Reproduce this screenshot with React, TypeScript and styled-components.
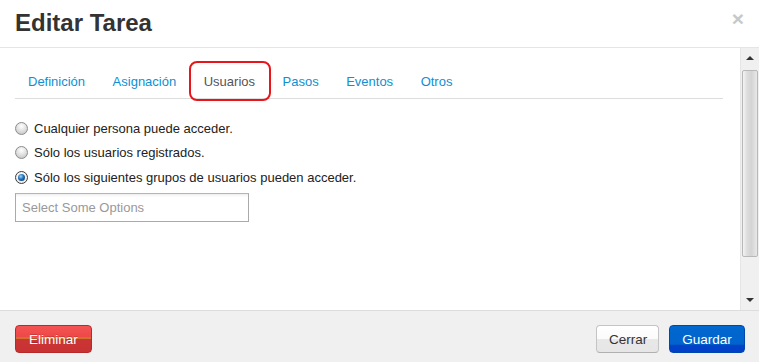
import React, {useState} from 'react';
import styled, {createGlobalStyle, css} from 'styled-components';

const GlobalStyle = createGlobalStyle`
  html, body {
    margin: 0;
    padding: 0;
    background: #fff;
  }
  body {
    font-family: "Liberation Sans", Arial, sans-serif;
    font-size: 13px;
    color: #333;
  }
`;

const Dialog = styled.div`
  width: 759px;
  height: 362px;
  display: flex;
  flex-direction: column;
  background: #fff;
  overflow: hidden;
`;

const Header = styled.div`
  height: 47px;
  border-bottom: 1px solid #e5e5e5;
  display: flex;
  align-items: center;
  justify-content: space-between;
  padding: 0 15px 0 15px;
  flex-shrink: 0;
`;

const Title = styled.h3`
  margin: 0;
  font-size: 24px;
  font-weight: bold;
  color: #333;
  line-height: 30px;
  position: relative;
  top: -1px;
`;

const Close = styled.span`
  font-size: 21px;
  font-weight: bold;
  color: #c8c8c8;
  line-height: 18px;
  cursor: pointer;
  position: relative;
  top: -5px;
  right: 0;
`;

const BodyRow = styled.div`
  flex: 1;
  display: flex;
  min-height: 0;
`;

const Body = styled.div`
  flex: 1;
  padding: 17px 17px 0 15px;
`;

const Tabs = styled.ul`
  list-style: none;
  margin: 0;
  padding: 0;
  display: flex;
  border-bottom: 1px solid #ddd;
`;

const Tab = styled.li<{active?: boolean}>`
  position: relative;
  padding: 0 14.5px 0 13px;
  line-height: 33px;
  font-size: 13px;
  color: #0e90d2;
  cursor: pointer;
  ${({active}) => active && css`
    color: #555;
  `}
`;

const Highlight = styled.span`
  position: absolute;
  left: -2px;
  right: -1px;
  top: -4px;
  bottom: -3px;
  border: 2px solid #e8161b;
  border-radius: 8px;
  pointer-events: none;
`;

const Options = styled.div`
  margin-top: 17px;
`;

const OptionRow = styled.label`
  height: 24.5px;
  display: flex;
  align-items: center;
  gap: 6px;
  font-size: 13px;
  color: #222;
  cursor: pointer;
`;

const RadioMark = styled.span<{checked?: boolean}>`
  width: 13px;
  height: 13px;
  box-sizing: border-box;
  border-radius: 50%;
  border: 1px solid #8c8c8c;
  background: radial-gradient(circle at 50% 30%, #ffffff 0%, #e6e6e6 40%, #bdbdbd 100%);
  position: relative;
  flex-shrink: 0;
  ${({checked}) => checked && css`
    border-color: #3a3a3a;
    background: radial-gradient(circle at 50% 35%, #ffffff 0%, #e4e4e4 100%);
    &::after {
      content: '';
      position: absolute;
      left: 2px;
      top: 2px;
      width: 7px;
      height: 7px;
      border-radius: 50%;
      background: radial-gradient(circle at 40% 35%, #9fd6ff 0%, #1f6fb8 45%, #0b2a52 100%);
    }
  `}
`;

const SelectBox = styled.div`
  margin-top: 3px;
  width: 234px;
  height: 29px;
  box-sizing: border-box;
  border: 1px solid #aaa;
  border-top-color: #b5b5b5;
  background: linear-gradient(#eee 0, #fff 3px, #fff 100%);
  display: flex;
  align-items: center;
  padding-left: 6px;
  font-size: 13px;
  color: #999;
`;

const ScrollBar = styled.div`
  width: 19px;
  display: flex;
  flex-direction: column;
  background: #f0f0f0;
  border-left: 1px solid #e6e6e6;
  box-sizing: border-box;
  padding: 0 1px;
`;

const ArrowButton = styled.div<{down?: boolean}>`
  height: 20px;
  display: flex;
  align-items: center;
  justify-content: center;
  &::before {
    content: '';
    width: 0;
    height: 0;
    border-left: 4px solid transparent;
    border-right: 4px solid transparent;
    ${({down}) => down
      ? css`border-top: 4px solid #333;`
      : css`border-bottom: 4px solid #333;`}
  }
`;

const Track = styled.div`
  flex: 1;
  display: flex;
  flex-direction: column;
  padding-top: 2px;
`;

const Thumb = styled.div`
  height: 187px;
  box-sizing: border-box;
  border: 1px solid #b8b8b8;
  border-radius: 2px;
  background: linear-gradient(to right, #f4f4f4 0%, #dcdcdc 30%, #d4d4d4 60%, #e8e8e8 100%);
`;

const Footer = styled.div`
  height: 52px;
  flex-shrink: 0;
  box-sizing: border-box;
  border-top: 1px solid #ddd;
  background: #f0f0f0;
  display: flex;
  align-items: flex-start;
  padding: 14px 14px 0 15px;
  gap: 10px;
`;

const Spacer = styled.div`
  flex: 1;
`;

const Button = styled.button<{variant?: 'danger' | 'primary' | 'default'}>`
  height: 28px;
  box-sizing: border-box;
  border-radius: 4px;
  font-family: "Liberation Sans", Arial, sans-serif;
  font-size: 13.5px;
  padding: 0 12px;
  cursor: pointer;
  color: #333;
  border: 1px solid #c4c4c4;
  border-bottom-color: #b0b0b0;
  background: linear-gradient(#ffffff 0%, #fbfbfb 50%, #e8e8e8 52%, #e6e6e6 100%);
  ${({variant}) => variant === 'danger' && css`
    color: #fff;
    width: 77px;
    border-color: #b52a2a;
    text-shadow: 0 -1px 0 rgba(0, 0, 0, .2);
    background: linear-gradient(#f45454 0%, #ee4747 44%, #d0722c 44%, #d0722c 49%, #cc3535 49%, #c93232 100%);
  `}
  ${({variant}) => variant === 'primary' && css`
    color: #fff;
    width: 76px;
    border-color: #0046b0;
    background: linear-gradient(#0068cf 0%, #0064cc 70%, #0042c8 74%, #0040c8 100%);
  `}
  ${({variant}) => variant === 'default' && css`
    width: 63px;
  `}
`;

const tabs = ['Definición', 'Asignación', 'Usuarios', 'Pasos', 'Eventos', 'Otros'];

const options = [
  'Cualquier persona puede acceder.',
  'Sólo los usuarios registrados.',
  'Sólo los siguientes grupos de usuarios pueden acceder.',
];

export default function App() {
  const [activeTab, setActiveTab] = useState('Usuarios');
  const [selected, setSelected] = useState(2);

  return (
    <>
      <GlobalStyle/>
      <Dialog>
        <Header>
          <Title>Editar Tarea</Title>
          <Close>×</Close>
        </Header>
        <BodyRow>
          <Body>
            <Tabs>
              {tabs.map(t => (
                <Tab key={t} active={t === activeTab} onClick={() => setActiveTab(t)}>
                  {t}
                  {t === activeTab && <Highlight/>}
                </Tab>
              ))}
            </Tabs>
            <Options>
              {options.map((o, i) => (
                <OptionRow key={o} onClick={() => setSelected(i)}>
                  <RadioMark checked={i === selected}/>
                  {o}
                </OptionRow>
              ))}
            </Options>
            <SelectBox>Select Some Options</SelectBox>
          </Body>
          <ScrollBar>
            <ArrowButton/>
            <Track>
              <Thumb/>
            </Track>
            <ArrowButton down/>
          </ScrollBar>
        </BodyRow>
        <Footer>
          <Button variant="danger">Eliminar</Button>
          <Spacer/>
          <Button variant="default">Cerrar</Button>
          <Button variant="primary">Guardar</Button>
        </Footer>
      </Dialog>
    </>
  );
}
